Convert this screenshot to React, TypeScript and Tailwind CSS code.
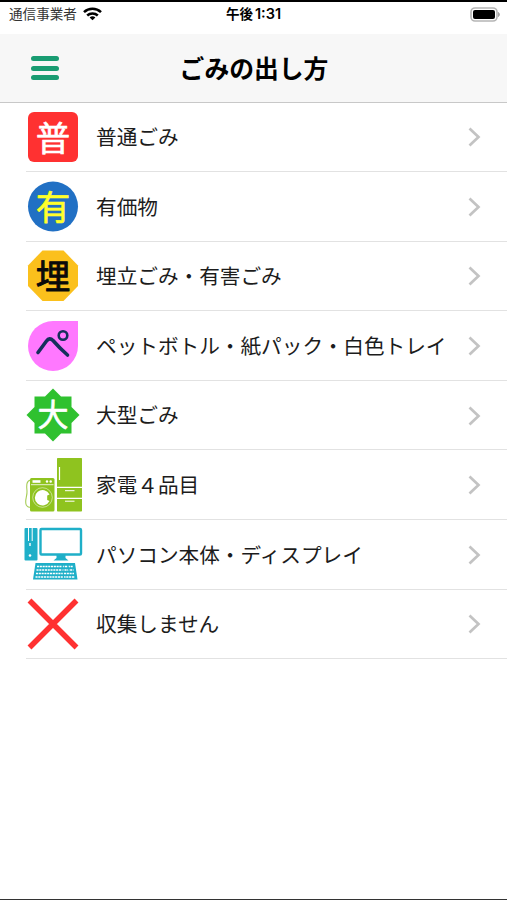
import type { ReactNode } from 'react';

const glyphFont = '"Noto Sans CJK JP", sans-serif';

interface GlyphProps {
	char: string;
	color: string;
	y?: number;
	size?: number;
	stroke?: number;
}

function Glyph({ char, color, y = 44.3, size = 34.5, stroke = 0.6 }: GlyphProps) {
	return (
		<text
			x="30"
			y={y}
			textAnchor="middle"
			fontFamily={glyphFont}
			fontSize={size}
			fontWeight={400}
			fill={color}
			stroke={color}
			strokeWidth={stroke}
			strokeLinejoin="round"
		>
			{char}
		</text>
	);
}

function WasherFridgeIcon() {
	return (
		<>
			<path
				d="M7.5 25C3 26 3.500 31 4 36S1 46 3.500 50.500C4.500 52 6 52.500 8 52.500"
				fill="none"
				stroke="#a5cc55"
				strokeWidth="1.1"
			/>
			<rect x="7" y="23" width="24.500" height="33.500" rx="1.500" fill="#8fc31f" />
			<path d="M8 29.700h22.500" stroke="#fff" strokeWidth="0.8" />
			<rect x="9.500" y="25.200" width="8" height="2.600" fill="#fff" />
			<circle cx="24" cy="26.500" r="1.200" fill="#fff" />
			<circle cx="27.700" cy="26.500" r="1.200" fill="#fff" />
			<circle cx="19.500" cy="42.500" r="9.800" fill="none" stroke="#fff" strokeWidth="0.5" />
			<path d="M26.500 39.500a7.700 7.700 0 1 0 0 6.500l-2.300-1v-4.500z" fill="#fff" />
			<rect x="34" y="3" width="25" height="53.500" rx="0.800" fill="#8fc31f" />
			<path d="M34 32.300h25M34 43.300h25" stroke="#fff" strokeWidth="1.200" />
			<path d="M36.500 12v13" stroke="#fff" strokeWidth="1.200" />
			<path d="M42 35.700h9.500M42 46.200h9.500" stroke="#fff" strokeWidth="1" />
		</>
	);
}

function ComputerIcon() {
	return (
		<>
			<rect x="1.500" y="4" width="13" height="32.500" rx="1" fill="#1fafc8" />
			<path d="M5.500 4v13M9.200 4v13" stroke="#fff" strokeWidth="1" />
			<path d="M7 19v3" stroke="#fff" strokeWidth="1.400" />
			<circle cx="7" cy="31.500" r="1.300" fill="#fff" />
			<rect x="17.500" y="5" width="40.500" height="25.500" rx="1" fill="#fff" stroke="#1fafc8" strokeWidth="2.400" />
			<path d="M33.500 31h9v3l3 2.500H30.500l3-2.500z" fill="#1fafc8" />
			<path d="M12.500 39h39.500l2.500 16.500H10z" fill="#1fafc8" />
			<path
				d="M14 42.500h36M13.500 46h37M13 49.500h38M12.500 53h39.500"
				stroke="#fff"
				strokeWidth="1.700"
				strokeDasharray="2.100 0.700"
			/>
			<path d="M39.500 40.500l1.200 14M45 41l1 7" stroke="#1fafc8" strokeWidth="1" />
		</>
	);
}

interface Item {
	label: string;
	icon: ReactNode;
}

const items: Item[] = [
	{
		label: '普通ごみ',
		icon: (
			<>
				<rect x="5" y="5" width="50" height="50" rx="6" fill="#ff3131" />
				<Glyph char="普" color="#fff" />
			</>
		),
	},
	{
		label: '有価物',
		icon: (
			<>
				<circle cx="30" cy="30.500" r="25" fill="#2170c4" />
				<Glyph char="有" color="#ffff2a" />
			</>
		),
	},
	{
		label: '埋立ごみ・有害ごみ',
		icon: (
			<>
				<path d="M19.500 4.500h21L55 19.500v20.500L40.500 55h-21L5 40V19.500z" fill="#fbc01c" />
				<Glyph char="埋" color="#0a0a0a" y={43} stroke={0.9} />
			</>
		),
	},
	{
		label: 'ペットボトル・紙パック・白色トレイ',
		icon: (
			<>
				<path d="M30 5h25v25a25 25 0 1 1-25-25z" fill="#ff78ff" />
				<path
					d="M15 36.500L23.500 25Q26.500 21 30 24.500Q37 32.500 44.500 39"
					fill="none"
					stroke="#15305c"
					strokeWidth="3.600"
					strokeLinecap="round"
				/>
				<circle cx="40" cy="19.500" r="4.300" fill="none" stroke="#15305c" strokeWidth="2.600" />
			</>
		),
	},
	{
		label: '大型ごみ',
		icon: (
			<>
				<path
					d="M30 3.500L38 11.500H48.500V22L56.500 30L48.500 38V48.500H38L30 56.500L22 48.500H11.500V38L3.500 30L11.500 22V11.500H22z"
					fill="#2fc12f"
				/>
				<Glyph char="大" color="#fff" y={41} size={31} />
			</>
		),
	},
	{ label: '家電４品目', icon: <WasherFridgeIcon /> },
	{ label: 'パソコン本体・ディスプレイ', icon: <ComputerIcon /> },
	{
		label: '収集しません',
		icon: <path d="M6.500 6.500l47 47M53.500 6.500l-47 47" stroke="#ff3131" strokeWidth="5.5" />,
	},
];

function StatusBar() {
	return (
		<div className="grid h-[34px] grid-cols-3 items-center border-t-2 border-black bg-white pr-[6px] pb-[8px] pl-[9px]">
			<div className="flex items-center gap-[6px]">
				<span className="text-[13.6px] leading-none whitespace-nowrap text-[#333]">通信事業者</span>
				<svg width="19" height="14" viewBox="0 0 19 14" fill="none" stroke="#000" strokeWidth="2.5">
					<path d="M1 5.200a12.300 12.300 0 0 1 17 0M4.200 8.500a7.700 7.700 0 0 1 10.600 0" />
					<path d="M9.500 13.200L6.600 10.500a4.300 4.300 0 0 1 5.800 0z" fill="#000" stroke="none" />
				</svg>
			</div>
			<span className="-ml-[3px] text-center text-[13.5px] leading-none font-bold whitespace-nowrap">
				午後<span className="ml-[2px] font-['Inter'] text-[14.5px] font-semibold">1:31</span>
			</span>
			<svg className="justify-self-end" width="31" height="15" viewBox="0 0 31 15">
				<rect x="1" y="1" width="26" height="13" rx="4" fill="#fff" stroke="#b5b5b5" strokeWidth="1.600" />
				<rect x="3" y="3" width="22" height="9" rx="2" fill="#000" />
				<path d="M28.500 5.500q2 2 0 4z" fill="#a5a5a5" stroke="#a5a5a5" />
			</svg>
		</div>
	);
}

function Header() {
	return (
		<header className="grid h-[69px] grid-cols-[1fr_auto_1fr] items-center border-b border-[#c8c8c8] bg-[#f7f7f7] pl-[31px]">
			<button type="button" aria-label="メニュー" className="flex w-[28px] flex-col gap-[4.5px]">
				<span className="h-[5px] rounded-full bg-[#199c72]" />
				<span className="h-[5px] rounded-full bg-[#199c72]" />
				<span className="h-[5px] rounded-full bg-[#199c72]" />
			</button>
			<h1 className="-ml-[30px] pb-[2px] text-[24.8px] leading-none font-bold text-black">ごみの出し方</h1>
		</header>
	);
}

export default function App() {
	return (
		<div className="flex h-[900px] w-[507px] flex-col overflow-hidden border-b border-[#333] bg-white font-['Noto_Sans_CJK_JP',sans-serif]">
			<StatusBar />
			<Header />

			<ul className="-mt-[0.5px]">
				{items.map(({ label, icon }) => (
					<li
						key={label}
						className="ml-[26px] flex h-[69.6px] items-center border-b border-[#e2e2e2] pr-[26px]"
					>
						<svg className="-ml-[3px] shrink-0" width="60" height="60" viewBox="0 0 60 60">
							{icon}
						</svg>
						<span className="ml-[13px] flex-1 pb-px text-[20.65px] leading-none whitespace-nowrap text-[#1c1c1c]">
							{label}
						</span>
						<svg
							className="mt-px"
							width="13"
							height="20"
							viewBox="0 0 13 20"
							fill="none"
							stroke="#c3c3c3"
							strokeWidth="2.700"
						>
							<path d="M1.500 1.500L10.500 10L1.500 18.500" />
						</svg>
					</li>
				))}
			</ul>
		</div>
	);
}
